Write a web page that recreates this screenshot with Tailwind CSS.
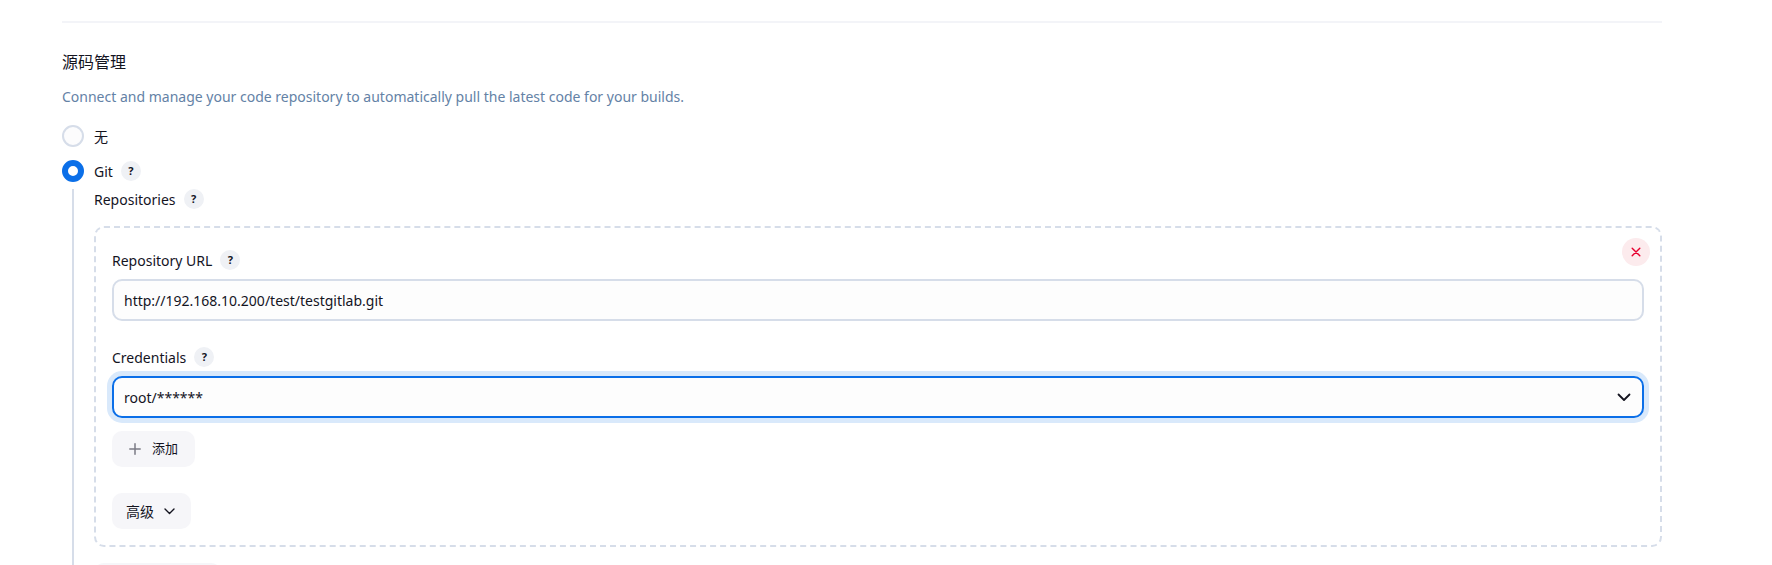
<!DOCTYPE html>
<html lang="zh">
<head>
    <meta charset="UTF-8">
    <title>源码管理</title>
    <script src="https://cdn.jsdelivr.net/npm/@tailwindcss/browser@4"></script>
</head>
<body class="bg-white">
    <div class="w-[1772px] h-[565px] overflow-hidden bg-white pl-[62px] pt-[21px] text-[14px] text-[#14141f] font-['Noto_Sans','Noto_Sans_CJK_SC',sans-serif]">
        <div class="w-[1600px]">
            <div class="h-[2px] bg-[#f3f4f8]"></div>

            <h2 class="mt-[28px] h-[22px] text-[16px] leading-[22px] font-normal">源码管理</h2>
            <p class="mt-[13px] h-[22px] leading-[22px] text-[#6482a6]">Connect and manage your code repository to automatically pull the latest code for your builds.</p>

            <!-- SCM radios -->
            <div class="mt-[17px] flex items-center h-[22px]">
                <span class="w-[22px] h-[22px] rounded-full border-2 border-[#d6dde9] bg-[#fcfcfd]"></span>
                <span class="ml-[10px]">无</span>
            </div>
            <div class="mt-[13px] flex items-center h-[22px]">
                <span class="w-[22px] h-[22px] rounded-full border-[6px] border-[#0b6fe8] bg-white"></span>
                <span class="ml-[10px]">Git</span>
                <span class="ml-[8px] w-[20px] h-[20px] rounded-full bg-[#eff1f5] text-[11px] font-bold flex items-center justify-center">?</span>
            </div>

            <!-- Git options -->
            <div class="mt-[7px] ml-[10px] border-l-2 border-[#d6dde9] pl-[20px] h-[400px]">
                <div class="flex items-center h-[20px]">
                    <span>Repositories</span>
                    <span class="ml-[8px] w-[20px] h-[20px] rounded-full bg-[#eff1f5] text-[11px] font-bold flex items-center justify-center">?</span>
                </div>

                <div class="relative mt-[17px] h-[321px] border-2 border-dashed border-[#d6dde9] rounded-[10px] px-[16px] pt-[22px]">
                    <button class="absolute top-[10px] right-[10px] w-[28px] h-[28px] rounded-full bg-[#fcebed] flex items-center justify-center">
                        <svg width="10" height="10" viewBox="0 0 10 10" fill="none" stroke="#e6002e" stroke-width="1.4" stroke-linecap="round"><path d="M1.2 1.2l7.6 7.6M8.8 1.2l-7.6 7.6"/></svg>
                    </button>

                    <div class="flex items-center h-[20px]">
                        <span>Repository URL</span>
                        <span class="ml-[8px] w-[20px] h-[20px] rounded-full bg-[#eff1f5] text-[11px] font-bold flex items-center justify-center">?</span>
                    </div>
                    <div class="mt-[9px] h-[42px] border-2 border-[#d6dde9] rounded-[10px] bg-[#fdfdfd] px-[10px] flex items-center">http://192.168.10.200/test/testgitlab.git</div>

                    <div class="mt-[26px] flex items-center h-[20px]">
                        <span>Credentials</span>
                        <span class="ml-[8px] w-[20px] h-[20px] rounded-full bg-[#eff1f5] text-[11px] font-bold flex items-center justify-center">?</span>
                    </div>
                    <div class="mt-[9px] h-[42px] border-2 border-[#0b6fe8] rounded-[10px] bg-[#fdfdfd] px-[10px] flex items-center justify-between shadow-[0_0_0_5px_#d9e9fb]">
                        <span>root/******</span>
                        <svg class="mr-[1px]" width="14" height="9" viewBox="0 0 14 9" fill="none" stroke="#14141f" stroke-width="1.8" stroke-linecap="round" stroke-linejoin="round"><path d="M1.5 1.5L7 7l5.500-5.500"/></svg>
                    </div>

                    <button class="mt-[13px] h-[36px] w-[83px] rounded-[10px] bg-[#f6f6f9] flex items-center pl-[17px]">
                        <svg width="12" height="12" viewBox="0 0 12 12" fill="none" stroke="#7b7b85" stroke-width="1.5" stroke-linecap="round"><path d="M6 .8v10.400M.8 6h10.400"/></svg>
                        <span class="ml-[11px] text-[13px]">添加</span>
                    </button>
                    <button class="mt-[26px] h-[36px] w-[79px] rounded-[10px] bg-[#f6f6f9] flex items-center pl-[14px]">
                        <span>高级</span>
                        <svg class="ml-[10px]" width="11" height="7" viewBox="0 0 11 7" fill="none" stroke="#14141f" stroke-width="1.4" stroke-linecap="round" stroke-linejoin="round"><path d="M1 1l4.500 4.500L10 1"/></svg>
                    </button>
                </div>

                <div class="mt-[16px] h-[36px] w-[127px] rounded-[10px] bg-[#f6f6f9]"></div>
            </div>
        </div>
    </div>
</body>
</html>
